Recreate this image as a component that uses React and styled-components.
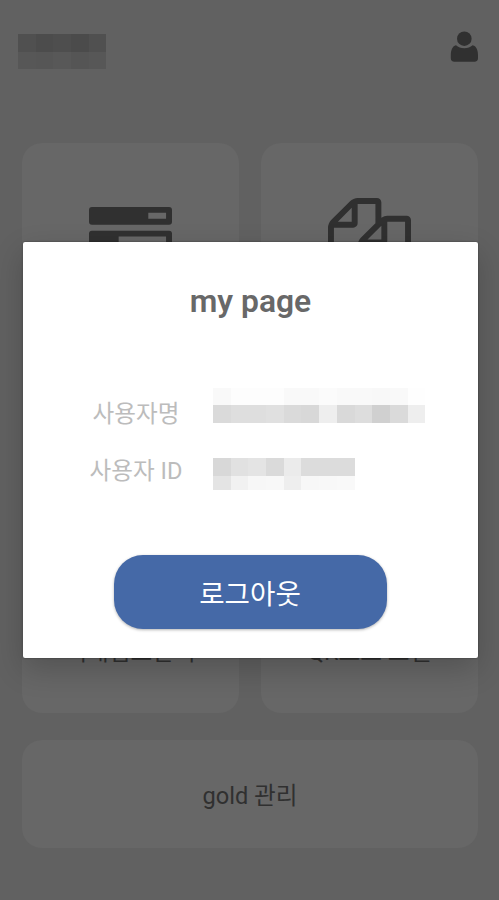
import React from 'react'
import styled, { createGlobalStyle } from 'styled-components'

const GlobalStyle = createGlobalStyle`
  * { box-sizing: border-box; }
  body {
    margin: 0;
    background: #616161;
    font-family: Roboto, 'Noto Sans CJK KR', sans-serif;
  }
`

const Page = styled.div`
  position: relative;
  height: 900px;
  overflow: hidden;
  background: #616161;
`

const Header = styled.header`
  display: flex;
  justify-content: space-between;
  align-items: flex-start;
  height: 143px;
  padding: 31px 20px 0 18px;
`

const Mosaic = styled.div`
  display: grid;
  grid-template-columns: ${props => props.columns};
  grid-template-rows: ${props => props.rows};
  margin-top: ${props => props.top || 0}px;
`

const Cell = styled.span`
  background: ${props => props.color};
`

const Menu = styled.main`
  display: grid;
  grid-template-columns: 217px 217px;
  grid-template-rows: 570px 108px;
  gap: 27px 22px;
  padding-left: 22px;
`

const MenuCard = styled.section`
  display: flex;
  flex-direction: column;
  align-items: center;
  justify-content: space-between;
  padding: 54px 0 44px;
  border-radius: 20px;
  background: #676767;
  color: #303030;
  font-size: 23.6px;
  line-height: 34px;
  white-space: nowrap;
`

const WideCard = styled(MenuCard)`
  grid-column: 1 / 3;
  justify-content: center;
  padding: 4px 0 0;
`

const MenuIcon = styled.svg`
  width: 83px;
  height: 83px;
  margin-top: ${props => props.top || 0}px;
  fill: #303030;
`

const Modal = styled.div`
  position: absolute;
  top: 242px;
  left: 23px;
  width: 455px;
  height: 416px;
  padding-top: 38px;
  border-radius: 2px;
  background: #fff;
  box-shadow: 0 11px 30px rgba(0, 0, 0, 0.2), 0 0 2px rgba(0, 0, 0, 0.5);
`

const Title = styled.h1`
  margin: 0;
  color: #686868;
  font-size: 31.8px;
  font-weight: 600;
  line-height: 42px;
  text-align: center;
`

const InfoRow = styled.div`
  display: grid;
  grid-template-columns: 130px 1fr;
  column-gap: 13px;
  height: 57px;
  padding-left: 47px;
`

const Label = styled.span`
  padding: 12px 0 0 2px;
  color: #bcbcbc;
  font-size: 23.6px;
  font-weight: 400;
  line-height: 36px;
  text-align: center;
`

const Info = styled.div`
  margin-top: 62px;
`

const LogoutButton = styled.button`
  display: block;
  width: 273px;
  height: 74px;
  margin: 57px 0 0 90.5px;
  padding: 0;
  border: 0;
  border-radius: 29px;
  background: #4569a7;
  box-shadow: 0 1px 3px rgba(0, 0, 0, 0.3);
  color: #fff;
  font-family: inherit;
  font-size: 27.6px;
`

const logoCells = [
  ['#505050', '#4c4c4c', '#4e4e4e', '#4b4b4b', '#505050'],
  ['#575757', '#565656', '#585858', '#555555', '#575757'],
]

const nameCells = [
  ['#f9f9f9', '#fdfdfd', '#fdfdfd', '#fdfdfd', '#f9f9f9', '#f9f9f9', '#fbfbfb', '#f9f9f9', '#f9f9f9', '#f8f8f8', '#f9f9f9', '#fefefe'],
  ['#dadada', '#dedede', '#dedede', '#e0e0e0', '#dadada', '#d8d8d8', '#eeeeee', '#d9d9d9', '#dddddd', '#d0d0d0', '#dadada', '#eeeeee'],
]

const idCells = [
  ['#d8d8d8', '#e1e1e1', '#e4e4e4', '#dadada', '#ebebeb', '#dcdcdc', '#dcdcdc', '#dcdcdc'],
  ['#e4e4e4', '#f1f1f1', '#f7f7f7', '#f8f8f8', '#eeeeee', '#f7f7f7', '#f8f8f8', '#f9f9f9'],
]

function Masked({ cells, columns, rows, top }) {
  return (
    <Mosaic columns={columns} rows={rows} top={top}>
      {cells.flat().map((color, i) => <Cell key={i} color={color} />)}
    </Mosaic>
  )
}

function UserIcon() {
  return (
    <svg width="29" height="32" viewBox="0 0 29 32" fill="#303030">
      <circle cx="14.3" cy="7.7" r="7.3" />
      <path d="M6 14.2Q9.3 17.2 14.3 17.2Q19.3 17.2 22.6 14.2C26.8 15.3 28 19.5 28 24.5V27Q28 30.8 24.3 30.8H4.5Q.8 30.8.8 27V24.5C.8 19.5 2 15.3 6 14.2Z" />
    </svg>
  )
}

export default function App() {
  return (
    <>
      <GlobalStyle />
      <Page>
        <Header>
          <Masked cells={logoCells} columns="18px 17px 18px 18px 17px" rows="18px 17px" top={3} />
          <UserIcon />
        </Header>
        <Menu>
          <MenuCard>
            <MenuIcon viewBox="0 0 1792 1792" top={4}>
              <path fillRule="evenodd" d="M64 128H1728Q1792 128 1792 192V448Q1792 512 1728 512H64Q0 512 0 448V192Q0 128 64 128ZM1280 256V384H1664V256ZM64 640H1728Q1792 640 1792 704V960Q1792 1024 1728 1024H64Q0 1024 0 960V704Q0 640 64 640ZM640 768V896H1664V768ZM64 1152H1728Q1792 1152 1792 1216V1472Q1792 1536 1728 1536H64Q0 1536 0 1472V1216Q0 1152 64 1152ZM1024 1280V1408H1664V1280Z" />
            </MenuIcon>
            거래점포관리
          </MenuCard>
          <MenuCard>
            <MenuIcon viewBox="0 0 1792 1792" top={1}>
              <path d="M1696 384q40 0 68 28t28 68v1216q0 40-28 68t-68 28h-960q-40 0-68-28t-28-68v-288h-544q-40 0-68-28t-28-68v-672q0-40 20-88t48-76l408-408q28-28 76-48t88-20h416q40 0 68 28t28 68v328q68-40 128-40h416zm-544 213l-299 299h299v-299zm-640-384l-299 299h299v-299zm196 647l316-316v-416h-384v416q0 40-28 68t-68 28h-416v640h512v-256q0-40 20-88t48-76zm956 804v-1152h-384v416q0 40-28 68t-68 28h-416v640h896z" />
            </MenuIcon>
            QR코드 스캔
          </MenuCard>
          <WideCard>gold 관리</WideCard>
        </Menu>
        <Modal>
          <Title>my page</Title>
          <Info>
            <InfoRow>
              <Label>사용자명</Label>
              <Masked cells={nameCells} columns="repeat(12, 17.7px)" rows="17px 18px" top={4} />
            </InfoRow>
            <InfoRow>
              <Label>사용자 ID</Label>
              <Masked cells={idCells} columns="repeat(8, 17.7px)" rows="18px 14px" top={17} />
            </InfoRow>
          </Info>
          <LogoutButton>로그아웃</LogoutButton>
        </Modal>
      </Page>
    </>
  )
}
